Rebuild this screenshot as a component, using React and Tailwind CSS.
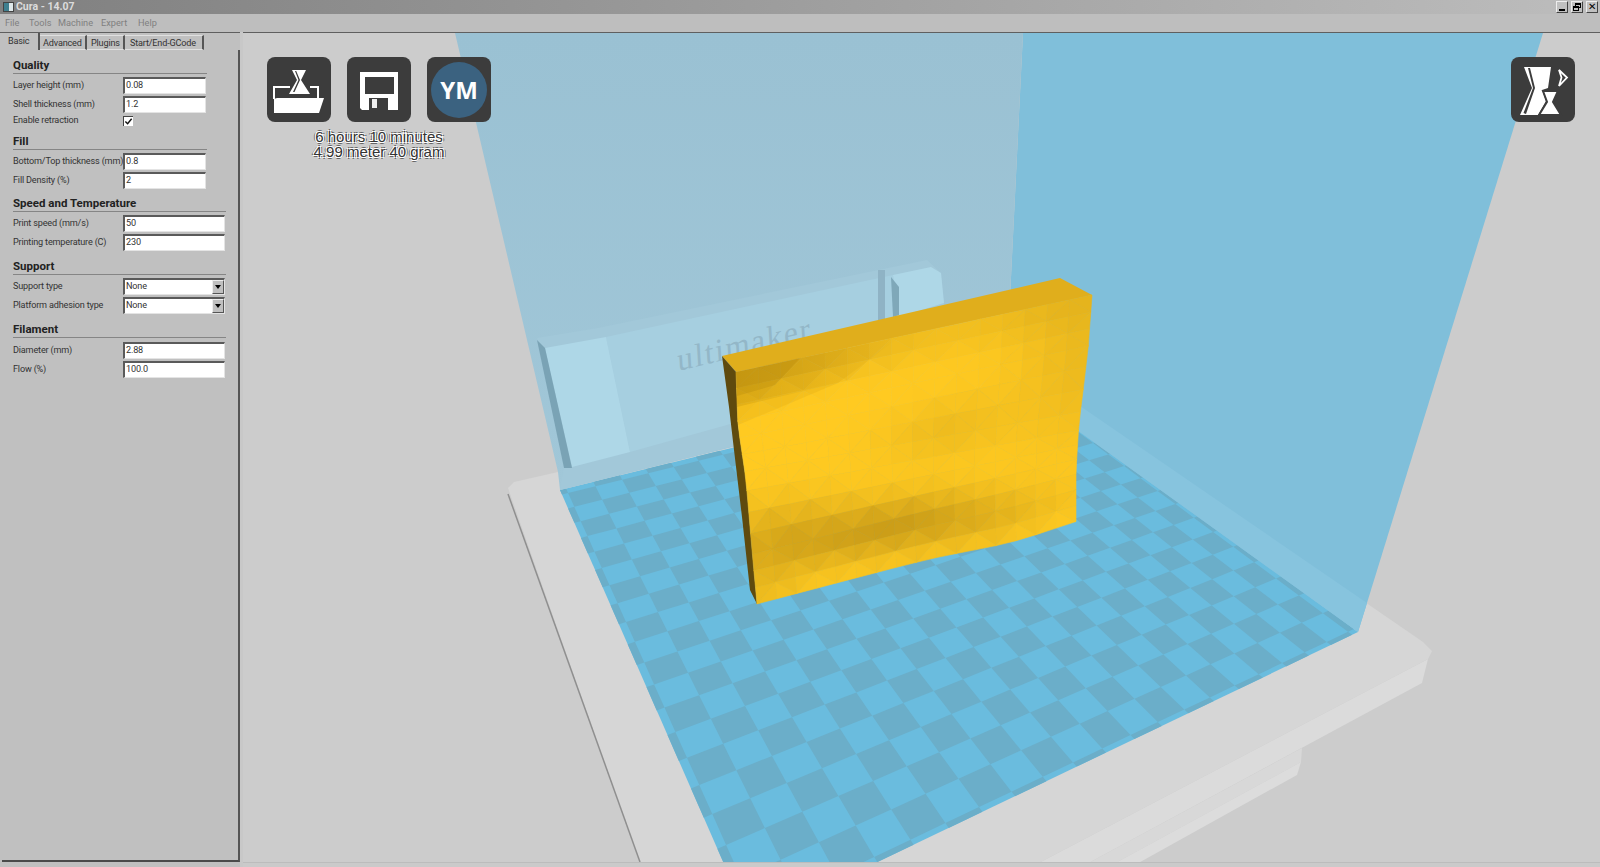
import React from 'react';

const UI_FONT = 'font-["Roboto",Arial,sans-serif]';

// back-left, front-left, front-right, back-right of the build plate on screen
const PLATE = [[560, 490], [750, 923], [1358, 632], [1013, 379]];
const CELLS_U = 19.5;
const CELLS_V = 20.5;
const OFFSET_U = 0.34;
const OFFSET_V = 0.22;

function makeProjector([[x0, y0], [x1, y1], [x2, y2], [x3, y3]]) {
  const dx1 = x1 - x2, dx2 = x3 - x2, sx = x0 - x1 + x2 - x3;
  const dy1 = y1 - y2, dy2 = y3 - y2, sy = y0 - y1 + y2 - y3;
  const det = dx1 * dy2 - dx2 * dy1;
  const g = (sx * dy2 - dx2 * sy) / det;
  const h = (dx1 * sy - sx * dy1) / det;
  const a = x1 - x0 + g * x1, b = x3 - x0 + h * x3;
  const d = y1 - y0 + g * y1, e = y3 - y0 + h * y3;
  return (u, v) => {
    const w = g * u + h * v + 1;
    return [(a * u + b * v + x0) / w, (d * u + e * v + y0) / w];
  };
}

function toPoints(list) {
  return list.map((p) => `${p[0].toFixed(1)},${p[1].toFixed(1)}`).join(' ');
}

function checkerCells() {
  const project = makeProjector(PLATE);
  const cells = [];
  for (let i = -1; i <= CELLS_U; i++) {
    for (let j = -1; j <= CELLS_V; j++) {
      if ((i + j + 2) % 2 !== 0) continue;
      const u0 = Math.max(0, (i + OFFSET_U) / CELLS_U);
      const u1 = Math.min(1, (i + 1 + OFFSET_U) / CELLS_U);
      const v0 = Math.max(0, (j + OFFSET_V) / CELLS_V);
      const v1 = Math.min(1, (j + 1 + OFFSET_V) / CELLS_V);
      if (u1 <= u0 || v1 <= v0) continue;
      cells.push(toPoints([project(u0, v0), project(u1, v0), project(u1, v1), project(u0, v1)]));
    }
  }
  return cells;
}

const LEFT_EDGE = [[736, 372], [738, 425], [746, 480], [752, 550], [757, 604]];
const RIGHT_EDGE = [[1092, 295], [1088, 350], [1079, 423], [1076, 470], [1076, 520]];

function alongEdge(edge, t) {
  const pos = Math.min(t * (edge.length - 1), edge.length - 1.001);
  const i = Math.floor(pos);
  const f = pos - i;
  return [edge[i][0] + (edge[i + 1][0] - edge[i][0]) * f, edge[i][1] + (edge[i + 1][1] - edge[i][1]) * f];
}

function bump(s, t, cs, ct, ws, wt) {
  return Math.exp(-((s - cs) ** 2) / (2 * ws * ws) - ((t - ct) ** 2) / (2 * wt * wt));
}

function facePoint(s, t) {
  const l = alongEdge(LEFT_EDGE, t);
  const r = alongEdge(RIGHT_EDGE, t);
  // the lower edge of the print bows down a little towards the right
  const bow = 5 * t ** 6 * bump(s, 1, 0.8, 1, 0.13, 1);
  return [l[0] + (r[0] - l[0]) * s, l[1] + (r[1] - l[1]) * s + bow];
}

// brightness of the yellow print, 1 = full yellow
function shade(s, t) {
  let v = 1;
  v -= 0.72 * bump(s, t, 0.42, 0.8, 0.2, 0.085);
  v -= 0.5 * bump(s, t, 0.06, 0.74, 0.16, 0.1);
  v -= 0.32 * bump(s, t, 0.72, 0.88, 0.18, 0.07);
  v -= 0.2 * bump(s, t, 0.03, 0.95, 0.08, 0.08);
  v -= 0.3 * bump(s, t, 1, 0.22, 0.14, 0.26);
  v -= 0.24 * bump(s, t, 0.6, 0.44, 0.13, 0.08);
  v -= 0.5 * bump(s, t, 0.12, 0.03, 0.26, 0.07);
  v -= 0.2 * bump(s, t, 0.85, 0.02, 0.22, 0.08);
  return Math.max(0, Math.min(1, v));
}

function shadeColor(v) {
  const mix = (a, b) => Math.round(a + (b - a) * v);
  return `rgb(${mix(190, 255)},${mix(146, 202)},${mix(22, 33)})`;
}

function faceFacets() {
  const facets = [];
  const cols = 16;
  const rows = 13;
  for (let i = 0; i < cols; i++) {
    for (let j = 0; j < rows; j++) {
      const s0 = i / cols, s1 = (i + 1) / cols, t0 = j / rows, t1 = (j + 1) / rows;
      const a = facePoint(s0, t0), b = facePoint(s1, t0), c = facePoint(s1, t1), d = facePoint(s0, t1);
      const fa = shadeColor(shade((s0 + s0 + s1) / 3, (t0 + t0 + t1) / 3));
      const fb = shadeColor(shade((s0 + s1 + s1) / 3, (t0 + t1 + t1) / 3));
      if ((i + j) % 2 === 0) {
        facets.push({ points: toPoints([a, b, d]), fill: fa });
        facets.push({ points: toPoints([b, c, d]), fill: fb });
      } else {
        facets.push({ points: toPoints([a, b, c]), fill: fa });
        facets.push({ points: toPoints([a, c, d]), fill: fb });
      }
    }
  }
  return facets;
}

function Scene() {
  return (
    <svg viewBox="243 33 1357 829" className="block w-full h-full">
      <defs>
        <linearGradient id="backWall" x1="0" y1="0" x2="0" y2="1">
          <stop offset="0" stopColor="#9ac1d3" />
          <stop offset="1" stopColor="#a1c7d8" />
        </linearGradient>
        <linearGradient id="topBand" x1="0" y1="0" x2="1" y2="0">
          <stop offset="0" stopColor="#a87a00" stopOpacity="0.3" />
          <stop offset="1" stopColor="#a87a00" stopOpacity="0" />
        </linearGradient>
      </defs>
      <rect x="243" y="33" width="1357" height="829" fill="#cccccc" />

      {/* platform */}
      <polygon points="1428,659 1422,683 1083,866 1033,866" fill="#dbdbdb" />
      <polygon points="1302,748 1301,762 1110,866 1083,866" fill="#d8d8d8" />
      <polygon points="1301,762 1297,775 1133,866 1110,866" fill="#dcdcdc" />
      <polygon points="508,488 514,482 558,472 1013,360 1423,642 1432,651 1428,659 1033,866 641,866" fill="#d6d6d6" />
      <line x1="508" y1="494" x2="640" y2="862" stroke="#8f8f8f" strokeWidth="1.5" />

      {/* plate */}
      <polygon points={toPoints(PLATE)} fill="#6abcde" />
      {checkerCells().map((pts, i) => (
        <polygon key={i} points={pts} fill="#6baec9" />
      ))}

      {/* build volume walls */}
      <polygon points="1023,33 1543,33 1358,632 1006,379" fill="#80bfda" />
      <polygon points="1358,632 1367,603 1013,360 1006,379" fill="#87c4de" />
      <polygon points="455,33 1023,33 1006,379 560,490 558,472" fill="url(#backWall)" />

      {/* machine back plate */}
      <polygon points="537,338 598,328 927,260 941,273 944,303 950,420 730,447 560,490 564,468" fill="#a2c8d9" />
      <polygon points="606,337 893,275 899,317 900,400 734,423 630,452" fill="#a6cfe0" />
      <polygon points="545,348 606,337 630,452 572,467" fill="#aed7e7" />
      <polygon points="537,340 545,348 572,468 564,468" fill="#7aa3b5" />
      <polygon points="893,275 931,267 941,273 944,303 899,317" fill="#aed7e7" />
      <polygon points="878,270 885,270 885,320 878,322" fill="#8fb3c5" />
      <polygon points="891,277 899,287 899,315 893,317" fill="#7fa8b9" />
      <text
        x="0"
        y="0"
        transform="translate(678 371) rotate(-13.5) skewX(-10)"
        fontFamily="'Liberation Serif', serif"
        fontSize="32"
        textLength="136"
        lengthAdjust="spacing"
        fill="#93b7c8"
      >
        ultimaker
      </text>

      {/* print */}
      <polygon points="722,356 1060,278 1092,295 736,372" fill="#e0ae1c" />
      <polygon points="722,356 736,372 738,425 746,480 752,550 757,604 750,590 742,517 734,450 729,407" fill="#5f4a0e" />
      {faceFacets().map((f, i) => (
        <polygon key={i} points={f.points} fill={f.fill} stroke={f.fill} strokeWidth="0.6" />
      ))}
      <polygon points="736,372 900,337 838,383 737,407" fill="url(#topBand)" />
      <polygon points="737,407 838,383 738,425" fill="#a87a00" fillOpacity="0.1" />
      <polygon points="736,372 800,358 775,385 737,396" fill="#8a6400" fillOpacity="0.14" />
    </svg>
  );
}

function OpenIcon() {
  return (
    <svg viewBox="0 0 64 64" className="w-16 h-16">
      <path d="M7 41V29H23M43 29H51V40" fill="none" stroke="#fff" strokeWidth="2" />
      <polygon points="7,55 7,41 10,40 57,40 52,55" fill="#fff" />
      <polygon points="25,12 39,12 34,22 43,36 22,36 30,22" fill="#fff" />
      <polygon points="28,13 29.2,13 33,22 27.5,34 26,34 31.5,22" fill="#3c3c3c" />
      <line x1="20" y1="38" x2="46" y2="38" stroke="#3c3c3c" strokeWidth="1.5" />
    </svg>
  );
}

function SaveIcon() {
  return (
    <svg viewBox="0 0 64 64" className="w-16 h-16">
      <polygon points="13,14 51,14 51,52 15,52 13,50" fill="#fff" />
      <rect x="18" y="19" width="29" height="17" fill="#3c3c3c" />
      <rect x="22" y="40" width="19" height="12" fill="#3c3c3c" />
      <rect x="25" y="41" width="5" height="9" fill="#eee" />
    </svg>
  );
}

function ViewIcon() {
  return (
    <svg viewBox="0 0 64 64" className="w-16 h-16">
      <polygon points="13,9 40,9 37,30 31,32 35,43 27,57 9,57 21,30" fill="#fff" />
      <polygon points="17,10 19,10 24,30 15,56 12.5,55 22,30" fill="#3c3c3c" />
      <polygon points="32,33 47,33 42,44 50,57 28,57 36,44" fill="#fff" stroke="#3c3c3c" strokeWidth="2" />
      <polygon points="48,12 56,19.5 48,28 50.5,19.5" fill="none" stroke="#fff" strokeWidth="1.8" />
    </svg>
  );
}

function IconButton({ children }) {
  return <div className="w-16 h-[65px] bg-[#3c3c3c] rounded-[8px] flex items-center justify-center">{children}</div>;
}

function TextRow({ label, value }) {
  return (
    <div className="flex items-center h-[17px] mb-[2px]">
      <span className="w-[110px] shrink-0 whitespace-nowrap">{label}</span>
      <div className="flex-1 h-full mr-[1px] bg-white border-t-2 border-l-2 border-t-[#5a5a5a] border-l-[#5a5a5a] border-r border-b border-r-[#e4e4e4] border-b-[#e4e4e4] pl-[1px] leading-[13px]">
        {value}
      </div>
    </div>
  );
}

function SelectRow({ label, value }) {
  return (
    <div className="flex items-center h-[17px] mb-[2px]">
      <span className="w-[110px] shrink-0 whitespace-nowrap">{label}</span>
      <div className="flex-1 h-full mr-[1px] flex bg-white border-t-2 border-l-2 border-t-[#5a5a5a] border-l-[#5a5a5a] border-r border-b border-r-[#e4e4e4] border-b-[#e4e4e4] pl-[1px] leading-[13px]">
        <span className="flex-1">{value}</span>
        <div className="w-[12px] h-[14px] bg-[#c0c0c0] border border-t-[#eee] border-l-[#eee] border-r-[#555] border-b-[#555] flex items-center justify-center">
          <div className="w-0 h-0 border-x-[3px] border-x-transparent border-t-[4px] border-t-black" />
        </div>
      </div>
    </div>
  );
}

function CheckRow({ label }) {
  return (
    <div className="flex items-center h-[12px]">
      <span className="w-[110px] shrink-0">{label}</span>
      <div className="w-[10px] h-[10px] bg-white border-t border-l border-t-[#444] border-l-[#444] flex items-center justify-center">
        <svg viewBox="0 0 10 10" className="w-[9px] h-[9px]">
          <path d="M1.5 5L4 7.5L8.5 2" fill="none" stroke="#111" strokeWidth="1.6" />
        </svg>
      </div>
    </div>
  );
}

function Section({ title, width, head, children }) {
  return (
    <div className={width}>
      <div className={`${head} flex items-end pb-[2px] border-b border-b-[#858585] text-[11.5px] tracking-normal leading-none font-bold text-[#222]`}>
        {title}
      </div>
      {children}
    </div>
  );
}

function Sidebar() {
  return (
    <div className={`w-[240px] shrink-0 flex flex-col border-t border-t-[#5f5f5f] bg-[#c0c0c0] text-[9.1px] tracking-[-0.17px] text-[#333] ${UI_FONT}`}>
      <div className="flex h-[17px] pl-[2px] shrink-0">
        <div className="w-[38px] pl-[6px] pt-[2px] border-r-2 border-r-[#555]">Basic</div>
        <div className="w-[47px] mt-[2px] pl-[3px] pt-[1px] border-t border-t-[#e0e0e0] border-r-2 border-r-[#555] border-b border-b-[#e0e0e0]">Advanced</div>
        <div className="w-[38px] mt-[2px] pl-[4px] pt-[1px] border-t border-t-[#e0e0e0] border-r-2 border-r-[#555] border-b border-b-[#e0e0e0]">Plugins</div>
        <div className="w-[79px] mt-[2px] pl-[5px] pt-[1px] border-t border-t-[#e0e0e0] border-r-2 border-r-[#555] border-b border-b-[#e0e0e0] whitespace-nowrap">Start/End-GCode</div>
      </div>
      <div className="flex-1 ml-[2px] mb-[5px] pt-[1px] pl-[11px] border-r-2 border-r-[#555] border-b-2 border-b-[#4a4a4a]">
        <Section title="Quality" width="w-[194px]" head="h-[23px] mb-[3px]">
          <TextRow label="Layer height (mm)" value="0.08" />
          <TextRow label="Shell thickness (mm)" value="1.2" />
          <CheckRow label="Enable retraction" />
        </Section>
        <Section title="Fill" width="w-[194px]" head="h-[23px] mb-[3px]">
          <TextRow label="Bottom/Top thickness (mm)" value="0.8" />
          <TextRow label="Fill Density (%)" value="2" />
        </Section>
        <Section title="Speed and Temperature" width="w-[213px]" head="h-[21px] mb-[3px]">
          <TextRow label="Print speed (mm/s)" value="50" />
          <TextRow label="Printing temperature (C)" value="230" />
        </Section>
        <Section title="Support" width="w-[213px]" head="h-[22px] mb-[3px]">
          <SelectRow label="Support type" value="None" />
          <SelectRow label="Platform adhesion type" value="None" />
        </Section>
        <Section title="Filament" width="w-[213px]" head="h-[22px] mb-[4px]">
          <TextRow label="Diameter (mm)" value="2.88" />
          <TextRow label="Flow (%)" value="100.0" />
        </Section>
      </div>
    </div>
  );
}

function WindowButton({ children }) {
  return (
    <div className="w-[12px] h-[12px] bg-[#c0c0c0] border border-t-[#eee] border-l-[#eee] border-r-[#444] border-b-[#444] flex items-center justify-center text-[10px] leading-none text-black">
      {children}
    </div>
  );
}

export default function App() {
  return (
    <div className={`w-[1600px] h-[867px] flex flex-col overflow-hidden bg-[#c8c8c8] ${UI_FONT}`}>
      <div className="h-[14px] shrink-0 flex items-center justify-between pl-[3px] pr-[2px] bg-gradient-to-r from-[#808080] to-[#bdbdbd]">
        <div className="flex items-center gap-[2px]">
          <div className="w-[11px] h-[10px] bg-[#dfe8ea] border border-[#444] flex">
            <div className="w-[5px] bg-[#3f7f8f]" />
          </div>
          <span className="text-[10.5px] font-bold text-[#dcdcdc] leading-none">Cura - 14.07</span>
        </div>
        <div className="flex gap-[3px]">
          <WindowButton>
            <div className="w-[6px] h-[2px] bg-black mt-[5px]" />
          </WindowButton>
          <WindowButton>
            <div className="relative w-[8px] h-[8px]">
              <div className="absolute right-0 top-0 w-[6px] h-[5px] border border-black border-t-2" />
              <div className="absolute left-0 bottom-0 w-[6px] h-[5px] border border-black border-t-2 bg-[#c0c0c0]" />
            </div>
          </WindowButton>
          <WindowButton>✕</WindowButton>
        </div>
      </div>
      <div className="h-[18px] shrink-0 flex items-center bg-[#bebebe] text-[9.2px] text-[#808080]">
        <span className="ml-[5px] w-[13px]">File</span>
        <span className="ml-[11px] w-[21px]">Tools</span>
        <span className="ml-[8px] w-[34px]">Machine</span>
        <span className="ml-[9px] w-[27px]">Expert</span>
        <span className="ml-[10px]">Help</span>
      </div>
      <div className="flex-1 flex min-h-0">
        <Sidebar />
        <div className="flex-1 ml-[3px] flex flex-col border-t border-t-[#5f5f5f]">
          <div className="relative flex-1 min-h-0">
            <Scene />
            <div className="absolute left-[24px] top-[24px] w-[224px]">
              <div className="flex gap-4">
                <IconButton><OpenIcon /></IconButton>
                <IconButton><SaveIcon /></IconButton>
                <IconButton>
                  <div className="w-[56px] h-[56px] rounded-full bg-[#3b6280] flex items-center justify-center text-[24px] font-bold text-white font-['Open_Sans',sans-serif]">
                    YM
                  </div>
                </IconButton>
              </div>
              <div className="mt-[7px] text-center text-[15px] leading-[15px] font-['Liberation_Sans',Arial,sans-serif] text-[#333] [text-shadow:-1px_-1px_0_#fff,1px_-1px_0_#fff,-1px_1px_0_#fff,1px_1px_0_#fff,-2px_0_0_#666,2px_0_0_#666,0_-2px_0_#666,0_2px_0_#666]">
                <div>6 hours 10 minutes</div>
                <div>4.99 meter 40 gram</div>
              </div>
            </div>
            <div className="absolute right-[25px] top-[24px]">
              <IconButton><ViewIcon /></IconButton>
            </div>
          </div>
          <div className="h-[5px] shrink-0 border-t border-t-[#bcbcbc] bg-[#cacaca]" />
        </div>
      </div>
    </div>
  );
}
